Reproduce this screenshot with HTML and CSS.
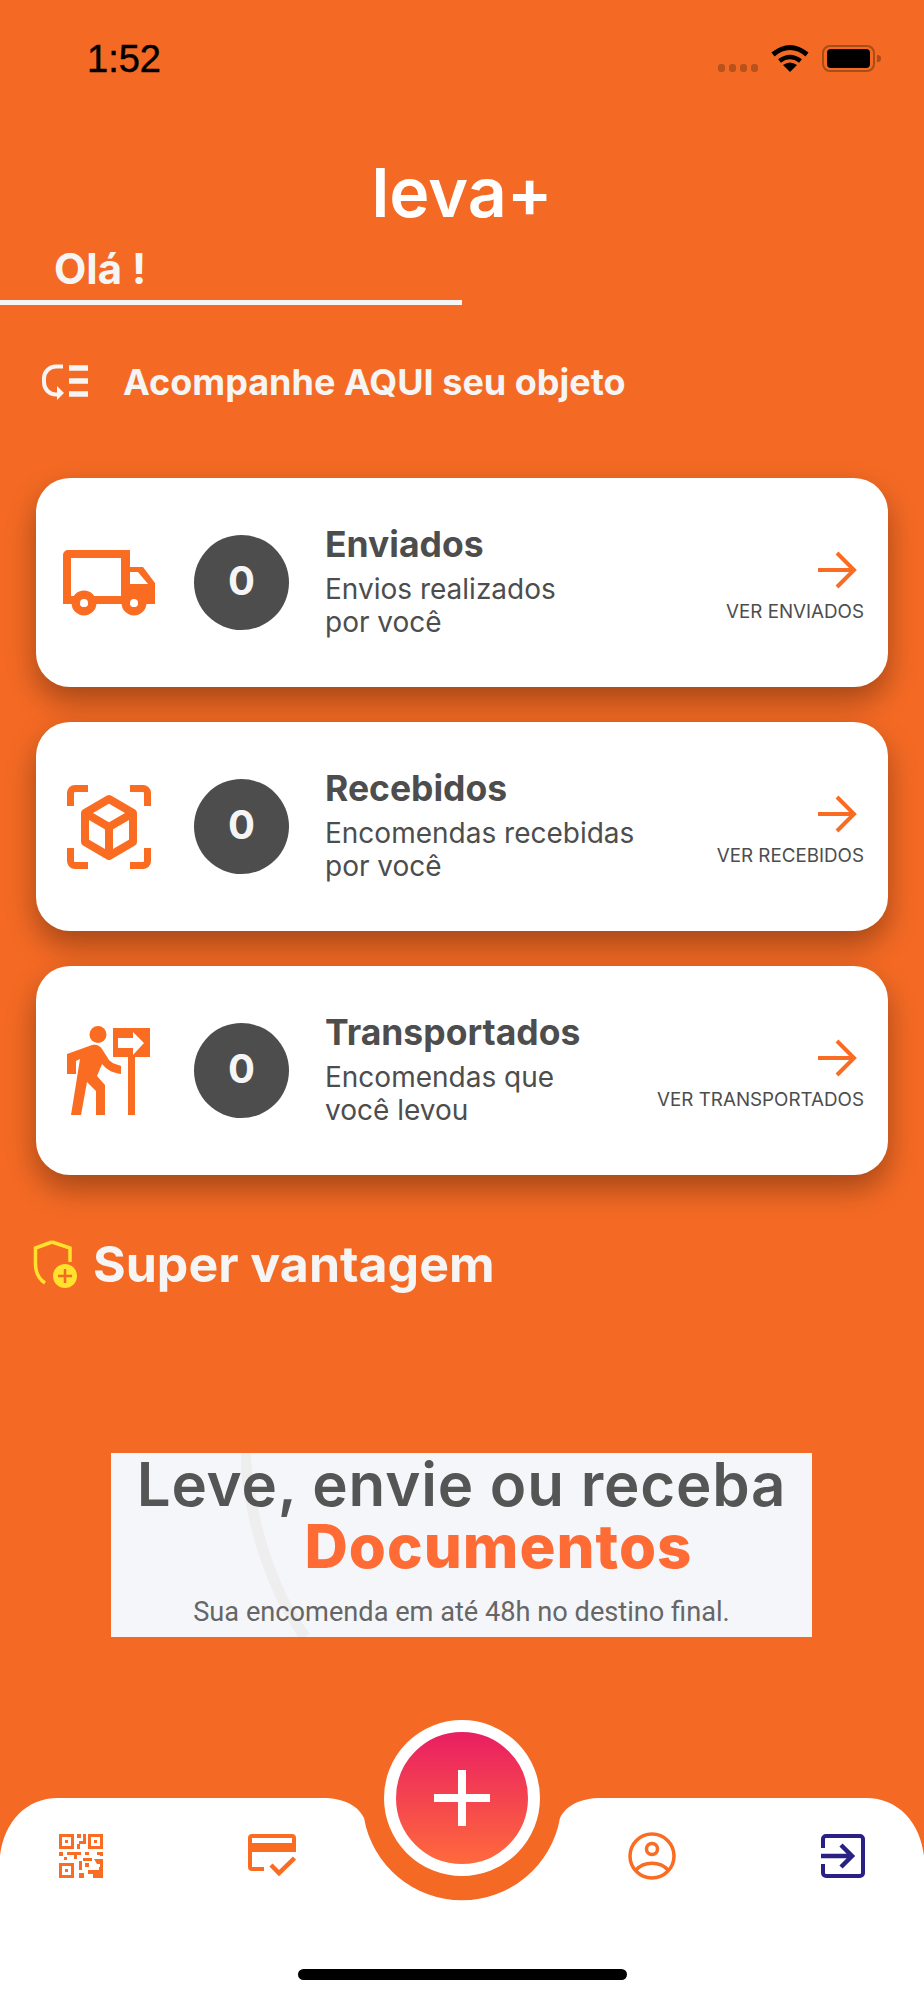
FILE: index.html
```html
<!DOCTYPE html>
<html lang="pt-BR">
<head>
<meta charset="UTF-8">
<meta name="viewport" content="width=device-width, initial-scale=1.0">
<title>Leva+</title>
<link rel="stylesheet" href="styles.css">
</head>
<body>
<div class="app">

  <div class="status-bar">
    <span class="time">1:52</span>
    <div class="status-icons">
      <span class="signal"><i></i><i></i><i></i><i></i></span>
      <svg class="wifi" width="38" height="28" viewBox="0 0 38 28">
        <path d="M19 28l-7-7q7-5 14 0z" fill="#000"/>
        <path d="M8.500 17q10.500-8 21 0" fill="none" stroke="#000" stroke-width="4.500"/>
        <path d="M2 10.500q17-14 34 0" fill="none" stroke="#000" stroke-width="5"/>
      </svg>
      <span class="battery"><span class="battery-fill"></span></span>
    </div>
  </div>

  <header class="logo-row">
    <span class="logo">leva+</span>
  </header>

  <div class="hello">
    <h2>Olá !</h2>
  </div>

  <div class="track-row">
    <svg width="48" height="38" viewBox="0 0 48 38" fill="none" stroke="#f5f5f5">
      <path d="M22 3.500H15a12 12 0 0 0-12 12v4a12 12 0 0 0 12 12h4" stroke-width="4"/>
      <path d="M16 23l7 7-7 7z" fill="#f5f5f5" stroke="none"/>
      <path d="M28 5h19M28 18h19M28 31h19" stroke-width="5.500"/>
    </svg>
    <span>Acompanhe AQUI seu objeto</span>
  </div>

  <section class="cards">
    <div class="card">
      <div class="card-icon">
        <svg width="92" height="66" viewBox="0 0 92 66" fill="#f96c22">
          <path fill-rule="evenodd" d="M5 0H67V17H80L92 33V54H0V5a5 5 0 0 1 5-5zM8 8V46H58V8zM67 22V34H85L75 22z"/>
          <path fill-rule="evenodd" d="M21 40.500a12.500 12.500 0 1 1 0 25 12.500 12.500 0 0 1 0-25zm0 8.500a4 4 0 1 0 0 8 4 4 0 0 0 0-8zM71 40.500a12.500 12.500 0 1 1 0 25 12.500 12.500 0 0 1 0-25zm0 8.500a4 4 0 1 0 0 8 4 4 0 0 0 0-8z"/>
          <circle cx="21" cy="53" r="4" fill="#fff"/>
          <circle cx="71" cy="53" r="4" fill="#fff"/>
        </svg>
      </div>
      <div class="count">0</div>
      <div class="card-text">
        <h3>Enviados</h3>
        <p>Envios realizados<br>por você</p>
      </div>
      <div class="card-link">
        <svg width="40" height="38" viewBox="0 0 40 38" fill="none" stroke="#f96c22" stroke-width="4">
          <path d="M0 19h36M19 2l17 17-17 17"/>
        </svg>
        <span>VER ENVIADOS</span>
      </div>
    </div>

    <div class="card">
      <div class="card-icon">
        <svg width="84" height="84" viewBox="0 0 84 84" fill="none" stroke="#f96c22" stroke-width="7">
          <path d="M3.500 21V8a4.500 4.500 0 0 1 4.500-4.500h13M63 3.500h13A4.500 4.500 0 0 1 80.500 8v13M80.500 63v13a4.500 4.500 0 0 1-4.500 4.500H63M21 80.500H8A4.500 4.500 0 0 1 3.500 76V63"/>
          <path stroke-width="8" stroke-linejoin="round" d="M42 14l24 14v29L42 71 18 57V28zM18 28l24 14 24-14M42 42v29"/>
        </svg>
      </div>
      <div class="count">0</div>
      <div class="card-text">
        <h3>Recebidos</h3>
        <p>Encomendas recebidas<br>por você</p>
      </div>
      <div class="card-link">
        <svg width="40" height="38" viewBox="0 0 40 38" fill="none" stroke="#f96c22" stroke-width="4">
          <path d="M0 19h36M19 2l17 17-17 17"/>
        </svg>
        <span>VER RECEBIDOS</span>
      </div>
    </div>

    <div class="card">
      <div class="card-icon">
        <svg width="84" height="90" viewBox="0 0 84 90" fill="#f96c22">
          <circle cx="31" cy="8.500" r="8.500"/>
          <path d="M0 28L25 19C30 18 33 20 35 23L42 34C46 38 49 38 54 40V48C46 47 40 44 35 38L30 50L38 59V89H29V65L20 56L14 89H4L13 33L9 35V48H0z"/>
          <path fill-rule="evenodd" d="M46 2H83V31H68V89H61V31H46zM51 12V22H66V29L77 17 66 6V12z"/>
        </svg>
      </div>
      <div class="count">0</div>
      <div class="card-text">
        <h3>Transportados</h3>
        <p>Encomendas que<br>você levou</p>
      </div>
      <div class="card-link">
        <svg width="40" height="38" viewBox="0 0 40 38" fill="none" stroke="#f96c22" stroke-width="4">
          <path d="M0 19h36M19 2l17 17-17 17"/>
        </svg>
        <span>VER TRANSPORTADOS</span>
      </div>
    </div>
  </section>

  <div class="super-row">
    <svg width="44" height="48" viewBox="0 0 44 48">
      <path d="M19 2l18 6v14M12 43C6 39 2.500 32 2.500 24V8L19 2" fill="none" stroke="#ffe12e" stroke-width="3.500"/>
      <circle cx="32" cy="36" r="12" fill="#ffe12e"/>
      <path d="M32 29v14M25 36h14" stroke="#f46a24" stroke-width="2.500"/>
    </svg>
    <span>Super vantagem</span>
  </div>

  <div class="banner">
    <svg class="banner-arc" width="70" height="184" viewBox="0 0 70 184">
      <path d="M4 0c4 60 22 130 60 184" fill="none" stroke="#eeeeee" stroke-width="11"/>
    </svg>
    <div class="banner-title">Leve, envie ou receba</div>
    <div class="banner-strong">Documentos</div>
    <div class="banner-sub">Sua encomenda em até 48h no destino final.</div>
  </div>

  <footer class="tabbar">
    <svg class="tabbar-bg" width="924" height="202" viewBox="0 0 924 202">
      <path d="M0 58C4 24 26 0 58 0H322C345 0 358 8 364 20A99.500 99.500 0 0 0 560 20C566 8 579 0 602 0H866C898 0 920 24 924 58V202H0z" fill="#fff"/>
    </svg>
    <div class="tabs">
      <div class="tabs-side">
        <svg width="44" height="44" viewBox="0 0 44 44" fill="#f96c22">
          <path fill-rule="evenodd" d="M0 0h15v15H0zM3 3v9h9V3zM29 0h15v15H29zM32 3v9h9V3zM0 29h15v15H0zM3 32v9h9v-9z"/>
          <path d="M6 6h3v3H6zM35 6h3v3h-3zM6 35h3v3H6zM18 0h4v4h-4zM24 0h3v10h-7v-3h4zM18 10h3v5h-3zM0 18h4v4H0zM8 18h14v3h-4v4h-3v-4H8zM5 23h3v3H5zM26 18h4v3h-4zM38 18h6v4h-3v-1h-3zM24 24h9v3h-9zM35 25h9v5h-6zM41 30h3v3h-3zM20 27h3v9h-3zM26 29h4v4h-4zM29 36h11v-3h4v11H34v-4h-5zM20 39h5v5h-5z"/>
        </svg>
        <svg width="48" height="44" viewBox="0 0 48 44" fill="none" stroke="#f96c22">
          <path fill-rule="evenodd" d="M4 0H44a4 4 0 0 1 4 4V18H4V33H16V37H4a4 4 0 0 1-4-4V4a4 4 0 0 1 4-4zM4 4V9H44V4z" fill="#f96c22" stroke="none"/>
          <path d="M23 31l8 8 15.500-15" stroke-width="4.500"/>
        </svg>
      </div>
      <div class="tabs-side">
        <svg width="48" height="48" viewBox="0 0 48 48" fill="none" stroke="#f96c22" stroke-width="3.500">
          <circle cx="24" cy="24" r="22"/>
          <circle cx="24" cy="17" r="5.500"/>
          <path d="M8 38C16 29 32 29 40 38"/>
        </svg>
        <svg width="44" height="44" viewBox="0 0 44 44" fill="none" stroke="#2a2185" stroke-width="4">
          <path d="M2 14V5a3 3 0 0 1 3-3h34a3 3 0 0 1 3 3v34a3 3 0 0 1-3 3H5a3 3 0 0 1-3-3v-9"/>
          <path d="M0 22h30M20 11l11 11-11 11" stroke-width="4.500"/>
        </svg>
      </div>
    </div>
    <div class="home-bar"></div>
    <button class="fab">
      <svg width="56" height="56" viewBox="0 0 56 56" stroke="#fff" stroke-width="8">
        <path d="M28 0v56M0 28h56"/>
      </svg>
    </button>
  </footer>

</div>
</body>
</html>
```

FILE: styles.css
```css
* {
  box-sizing: border-box;
}
body {
  margin: 0;
  padding: 0;
  background-color: #f46a24;
  font-family: 'Inter', sans-serif;
}
.app {
  width: 924px;
  height: 2000px;
  display: flex;
  flex-direction: column;
  overflow: hidden;
}

/* status bar */
.status-bar {
  height: 118px;
  padding: 40px 49px 0 87px;
  display: flex;
  justify-content: space-between;
  align-items: flex-start;
}
.time {
  font-family: 'Liberation Sans', sans-serif;
  font-size: 38px;
  line-height: 38px;
  -webkit-text-stroke: 0.5px #000;
  color: #000;
}
.status-icons {
  height: 32px;
  display: flex;
  align-items: flex-end;
  gap: 13px;
}
.signal {
  display: flex;
  gap: 4px;
}
.signal i {
  width: 7px;
  height: 8px;
  border-radius: 3px;
  background-color: #b8521c;
}
.battery {
  position: relative;
  width: 53px;
  height: 27px;
  padding: 2px 3px;
  border: 2px solid #a84c18;
  border-radius: 8px;
  display: block;
}
.battery::after {
  content: '';
  position: absolute;
  right: -8px;
  top: 8px;
  width: 4px;
  height: 7px;
  border-radius: 0 4px 4px 0;
  background-color: #a84c18;
}
.battery-fill {
  display: block;
  height: 100%;
  background-color: #000;
  border-radius: 4px;
}

/* logo */
.logo-row {
  height: 110px;
  padding-top: 34px;
  display: flex;
  justify-content: center;
  align-items: flex-start;
}
.logo {
  font-size: 68px;
  font-weight: 600;
  line-height: 80px;
  color: #fff;
}

.hello {
  width: 462px;
  height: 77px;
  padding: 10px 0 0 54px;
  border-bottom: 5px solid #f5f5f5;
}
.hello h2 {
  margin: 0;
  font-size: 42px;
  font-weight: 700;
  line-height: 62px;
  color: #f5f5f5;
}

.track-row {
  margin-top: 55px;
  padding-left: 41px;
  display: flex;
  align-items: center;
  gap: 34px;
  height: 44px;
  font-size: 36px;
  font-weight: 700;
  color: #f5f5f5;
}

/* cards */
.cards {
  margin-top: 74px;
  padding: 0 36px;
  display: flex;
  flex-direction: column;
  gap: 35px;
}
.card {
  height: 209px;
  background-color: #fff;
  border-radius: 34px;
  box-shadow: 0 14px 30px rgba(0, 0, 0, 0.33);
  display: flex;
  align-items: center;
  padding-right: 24px;
  position: relative;
}
.card-icon {
  width: 146px;
  margin-right: 12px;
  display: flex;
  justify-content: center;
  flex-shrink: 0;
}
.count {
  width: 95px;
  height: 95px;
  padding-bottom: 4px;
  border-radius: 50%;
  background-color: #4d4d4d;
  color: #f5f5f5;
  font-size: 40px;
  font-weight: 700;
  display: flex;
  align-items: center;
  justify-content: center;
  flex-shrink: 0;
}
.card-text {
  margin-left: 36px;
  padding-bottom: 3px;
  flex: 1;
}
.card-text h3 {
  margin: 0 0 7px;
  font-size: 35.5px;
  line-height: 42px;
  font-weight: 700;
  color: #4d4d4d;
}
.card-text p {
  margin: 0;
  font-size: 28px;
  line-height: 33px;
  color: #4d4d4d;
}
.card-link {
  padding-top: 73px;
  display: flex;
  flex-direction: column;
  align-items: flex-end;
  position: absolute;
  right: 24px;
  top: 0;
}
.card-link svg {
  margin-right: 6px;
  margin-bottom: 11px;
}
.card-link span {
  font-size: 18.8px;
  line-height: 24px;
  color: #4d4d4d;
}

.super-row {
  margin-top: 59px;
  padding-left: 33px;
  display: flex;
  align-items: center;
  gap: 16px;
  font-size: 50px;
  font-weight: 700;
  line-height: 60px;
  color: #f5f5f5;
}

/* banner */
.banner {
  margin: 159px 0 0 111px;
  width: 701px;
  height: 184px;
  background-color: #f4f6f9;
  position: relative;
  overflow: hidden;
  text-align: center;
}
.banner-arc {
  position: absolute;
  left: 130px;
  top: 0;
}
.banner-title,
.banner-strong,
.banner-sub {
  position: relative;
}
.banner-title {
  margin-top: -5px;
  font-size: 60px;
  font-weight: 600;
  line-height: 72px;
  letter-spacing: 0.8px;
  color: #555;
}
.banner-strong {
  margin-top: -3px;
  font-size: 60px;
  font-weight: 800;
  line-height: 58px;
  letter-spacing: 1px;
  padding-left: 74px;
  color: #ff6b35;
}
.banner-sub {
  margin-top: 22px;
  font-family: 'Roboto', sans-serif;
  font-size: 27.2px;
  line-height: 30px;
  color: #666;
}

/* bottom tabs */
.tabbar {
  margin-top: auto;
  height: 202px;
  position: relative;
}
.tabbar-bg {
  position: absolute;
  left: 0;
  top: 0;
}
.tabs {
  position: relative;
  padding: 34px 59px 0;
  display: flex;
  justify-content: space-between;
}
.tabs-side {
  width: 237px;
  display: flex;
  justify-content: space-between;
  align-items: center;
}
.home-bar {
  position: absolute;
  left: 298px;
  bottom: 20px;
  width: 329px;
  height: 11px;
  border-radius: 6px;
  background-color: #000;
}
.fab {
  position: absolute;
  left: 384px;
  top: -78px;
  width: 156px;
  height: 156px;
  padding: 0;
  border: 12px solid #fff;
  border-radius: 50%;
  background: linear-gradient(180deg, #e91e63 0%, #ff6a3c 100%);
  display: flex;
  align-items: center;
  justify-content: center;
}
```
